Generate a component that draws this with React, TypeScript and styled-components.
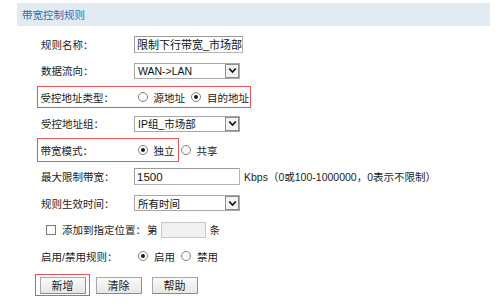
import React from "react";
import styled, { createGlobalStyle } from "styled-components";

const Global = createGlobalStyle`
  html, body { margin: 0; padding: 0; background: #fff; }
  body { font-family: "Liberation Sans", "Noto Sans CJK SC", sans-serif; }
`;

const Page = styled.div`
  width: 500px;
  height: 307px;
  box-sizing: border-box;
  padding-top: 3px;
  background: #fff;
  color: #222;
  font-family: "Liberation Sans", "Noto Sans CJK SC", sans-serif;
  font-size: 10.5px;
`;

const Header = styled.div`
  margin-left: 17px;
  width: 473px;
  height: 23px;
  box-sizing: border-box;
  padding-left: 5px;
  background: #e3ebf2;
  color: #2d6db3;
  font-size: 10.5px;
  display: flex;
  align-items: center;
`;

const Form = styled.div`
  margin-top: 5px;
  display: flex;
  flex-direction: column;
`;

const Row = styled.div<{ $indent?: number }>`
  height: 26.5px;
  display: flex;
  align-items: center;
  padding-left: ${(p) => p.$indent ?? 41}px;
`;

const Highlight = styled.div<{ $h?: number; $pr?: number }>`
  display: flex;
  align-items: center;
  height: ${(p) => p.$h ?? 22}px;
  margin-left: -4px;
  padding-left: 2.5px;
  padding-right: ${(p) => p.$pr ?? 1}px;
  border: 1.5px solid #ec5458;
  box-sizing: border-box;
`;

const Label = styled.span`
  width: 93px;
  flex: none;
  white-space: nowrap;
  color: #222;
`;

const Text = styled.span<{ $ml?: number }>`
  white-space: nowrap;
  margin-left: ${(p) => p.$ml ?? 0}px;
  color: #222;
`;

const TextInput = styled.div<{ $w: number; $h?: number; $fs?: number; $ls?: number }>`
  width: ${(p) => p.$w}px;
  height: ${(p) => p.$h ?? 17}px;
  box-sizing: border-box;
  border: 1px solid #b4b4b4;
  border-top-color: #9a9a9a;
  border-left-color: #9a9a9a;
  background: #fff;
  display: flex;
  align-items: center;
  padding-left: 2px;
  color: #111;
  font-size: ${(p) => p.$fs ?? 11.5}px;
  letter-spacing: ${(p) => p.$ls ?? 0}px;
  white-space: nowrap;
  overflow: hidden;
`;

const DisabledInput = styled.div`
  width: 45px;
  height: 16px;
  box-sizing: border-box;
  border: 1px solid #c8c8c8;
  background: #f1f1f1;
  margin: 0 4px 0 3px;
`;

const SelectBox = styled.div`
  width: 106px;
  height: 16px;
  box-sizing: border-box;
  border: 1px solid #a8a8a8;
  background: #fff;
  display: flex;
  align-items: center;
`;

const SelectText = styled.span`
  flex: 1;
  padding-left: 3px;
  color: #111;
  font-size: 10.5px;
  white-space: nowrap;
`;

const SelectArrow = styled.span`
  width: 14px;
  height: 14px;
  box-sizing: border-box;
  border: 1px solid #8c8c8c;
  background: #f3f3f3;
  display: flex;
  align-items: center;
  justify-content: center;
`;

const RadioCircle = styled.span<{ $checked?: boolean }>`
  width: 10px;
  height: 10px;
  flex: none;
  border-radius: 50%;
  border: 1px solid #808080;
  box-sizing: border-box;
  background: #fff;
  margin: 0 6px 0 4px;
  display: inline-flex;
  align-items: center;
  justify-content: center;
  &::after {
    content: "";
    width: 4px;
    height: 4px;
    border-radius: 50%;
    background: ${(p) => (p.$checked ? "#1a1a1a" : "transparent")};
  }
`;

const Check = styled.span`
  width: 10px;
  height: 10px;
  flex: none;
  box-sizing: border-box;
  border: 1px solid #7a7a7a;
  background: #fff;
  margin-right: 6px;
`;

const ButtonRow = styled.div`
  margin-top: 4.5px;
  padding-left: 35px;
  display: flex;
  align-items: center;
`;

const ButtonHighlight = styled.div`
  border: 1.5px solid #ec5458;
  padding: 1.5px 3px 1.5px 3.5px;
  display: flex;
`;

const Button = styled.button<{ $ml?: number }>`
  width: 46px;
  height: 17px;
  margin: 0 0 0 ${(p) => p.$ml ?? 0}px;
  padding: 0;
  box-sizing: border-box;
  border: 1px solid #a8a8a8;
  border-bottom-color: #8c8c8c;
  border-right-color: #8c8c8c;
  background: linear-gradient(#fbfbfb, #e6e6e6);
  font-family: "Noto Sans CJK SC", sans-serif;
  font-size: 11px;
  color: #222;
  display: flex;
  align-items: center;
  justify-content: center;
`;

const Chevron = () => (
  <svg width="9" height="7" viewBox="0 0 9 7">
    <polyline points="1.2,1.5 4.5,5 7.8,1.5" fill="none" stroke="#111" strokeWidth="1.7" />
  </svg>
);

const Select = ({ value }: { value: string }) => (
  <SelectBox>
    <SelectText>{value}</SelectText>
    <SelectArrow>
      <Chevron />
    </SelectArrow>
  </SelectBox>
);

const Radio = ({ checked, label, ml }: { checked?: boolean; label: string; ml?: number }) => (
  <>
    <RadioCircle $checked={checked} style={ml !== undefined ? { marginLeft: ml } : undefined} />
    <Text>{label}</Text>
  </>
);

export default function App() {
  return (
    <Page>
      <Global />
      <Header>带宽控制规则</Header>
      <Form>
        <Row>
          <Label>规则名称：</Label>
          <TextInput $w={109} $fs={11} $ls={0}>限制下行带宽_市场部</TextInput>
        </Row>
        <Row>
          <Label>数据流向：</Label>
          <Select value="WAN->LAN" />
        </Row>
        <Row>
          <Highlight $h={22} $pr={1}>
            <Label>受控地址类型：</Label>
            <Radio label="源地址" />
            <Radio checked label="目的地址" ml={6} />
          </Highlight>
        </Row>
        <Row>
          <Label>受控地址组：</Label>
          <Select value="IP组_市场部" />
        </Row>
        <Row>
          <Highlight $h={24} $pr={3}>
            <Label>带宽模式：</Label>
            <Radio checked label="独立" />
          </Highlight>
          <Radio label="共享" ml={2} />
        </Row>
        <Row>
          <Label>最大限制带宽：</Label>
          <TextInput $w={106} $h={17} $fs={11.5}>1500</TextInput>
          <Text $ml={4}>Kbps（0或100-1000000，0表示不限制）</Text>
        </Row>
        <Row>
          <Label>规则生效时间：</Label>
          <Select value="所有时间" />
        </Row>
        <Row $indent={46}>
          <Check />
          <Text>添加到指定位置：</Text>
          <Text $ml={1}>第</Text>
          <DisabledInput />
          <Text>条</Text>
        </Row>
        <Row>
          <Label>启用/禁用规则：</Label>
          <Radio checked label="启用" />
          <Radio label="禁用" ml={6} />
        </Row>
      </Form>
      <ButtonRow>
        <ButtonHighlight>
          <Button>新增</Button>
        </ButtonHighlight>
        <Button $ml={6}>清除</Button>
        <Button $ml={10}>帮助</Button>
      </ButtonRow>
    </Page>
  );
}
